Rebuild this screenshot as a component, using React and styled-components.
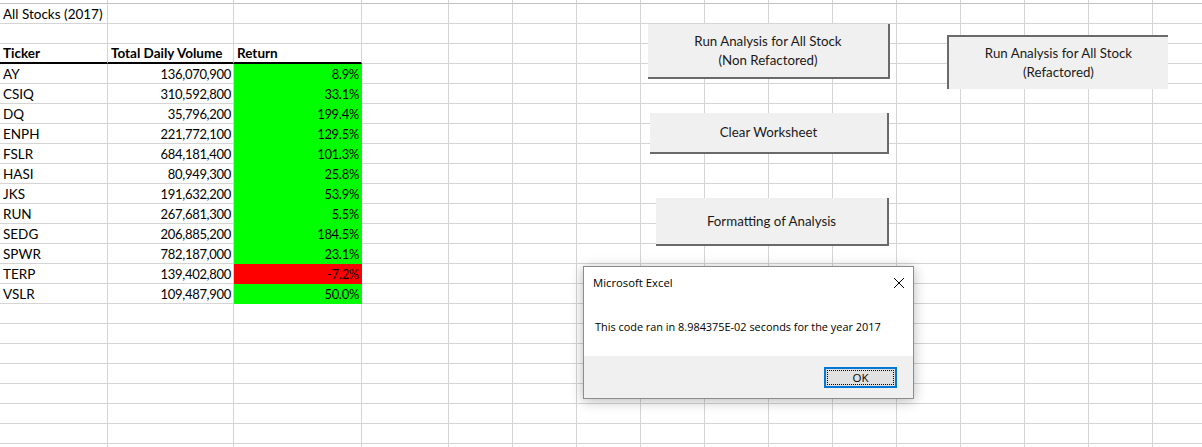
import React from "react";
import styled, { createGlobalStyle } from "styled-components";

const GlobalStyle = createGlobalStyle`
  html, body { margin: 0; padding: 0; background: #fff; }
  body { width: 1202px; height: 447px; overflow: hidden; font-family: "Lato", sans-serif; }
`;

const COLS = "108px 126px 128px 87px repeat(12, 64px)";
const GRID = "#d4d4d4";

const Sheet = styled.div`
  position: relative;
  width: 1202px;
  height: 447px;
  overflow: hidden;
  display: flex;
  flex-direction: column;
`;

const Row = styled.div`
  display: grid;
  grid-template-columns: ${COLS};
  height: ${(p) => p.$h}px;
  flex: none;
`;

const Cell = styled.div`
  box-sizing: border-box;
  border-right: 1px solid ${(p) => p.$fill || GRID};
  border-bottom: ${(p) =>
    p.$under ? "2px solid #000" : `1px solid ${p.$fill || (p.$topLine ? "#c2c2c2" : GRID)}`};
  background: ${(p) => p.$fill || "transparent"};
  display: flex;
  align-items: flex-end;
  justify-content: ${(p) => (p.$right ? "flex-end" : "flex-start")};
  padding: 0 ${(p) => (p.$right ? "2px" : "0")} 0 ${(p) => (p.$right ? "0" : "3px")};
  font-family: "Lato", sans-serif;
  font-size: ${(p) => (p.$right ? "13px" : "13.5px")};
  letter-spacing: ${(p) => (p.$right ? "-0.3px" : "0")};
  font-weight: ${(p) => (p.$bold ? 700 : 400)};
  line-height: 17px;
  color: #000;
  white-space: nowrap;
  overflow: visible;
`;

const FormButton = styled.div`
  position: absolute;
  box-sizing: border-box;
  left: ${(p) => p.$x}px;
  top: ${(p) => p.$y}px;
  width: ${(p) => p.$w}px;
  height: ${(p) => p.$h}px;
  background: #f0f0f0;
  border-right: ${(p) => (p.$pressed ? "none" : "2px solid #6a6a6a")};
  border-bottom: ${(p) => (p.$pressed ? "none" : "2px solid #6a6a6a")};
  border-top: ${(p) => (p.$pressed ? "2px solid #6a6a6a" : "none")};
  border-left: ${(p) => (p.$pressed ? "2px solid #6a6a6a" : "none")};
  display: flex;
  align-items: center;
  justify-content: center;
  text-align: center;
  font-family: "Lato", sans-serif;
  font-size: 13.3px;
  line-height: 19px;
  color: #1a1a1a;
`;

const Dialog = styled.div`
  position: absolute;
  left: 583px;
  top: 266px;
  width: 331px;
  height: 133px;
  box-sizing: border-box;
  border: 1px solid #8c8c8c;
  background: #fff;
  box-shadow: 0 2px 12px rgba(0, 0, 0, 0.28);
  display: flex;
  flex-direction: column;
  font-family: "Open Sans", sans-serif;
  font-size: 10.9px;
  color: #000;
`;

const TitleBar = styled.div`
  height: 31px;
  display: flex;
  align-items: center;
  justify-content: space-between;
  padding: 0 8px 0 9px;
  font-size: 11.3px;
`;

const Message = styled.div`
  flex: 1;
  display: flex;
  align-items: center;
  padding: 0 0 1px 11px;
`;

const Footer = styled.div`
  height: 42px;
  background: #f0f0f0;
  display: flex;
  align-items: center;
  justify-content: flex-end;
  padding-right: 16px;
`;

const OkButton = styled.div`
  width: 73px;
  height: 21px;
  box-sizing: border-box;
  border: 2px solid #0078d7;
  background: #e1e1e1;
  padding: 1px;
  display: flex;
`;

const OkInner = styled.div`
  flex: 1;
  border: 1px dotted #000;
  display: flex;
  align-items: center;
  justify-content: center;
  font-size: 11.5px;
`;

const rows = [
  ["AY", "136,070,900", "8.9%"],
  ["CSIQ", "310,592,800", "33.1%"],
  ["DQ", "35,796,200", "199.4%"],
  ["ENPH", "221,772,100", "129.5%"],
  ["FSLR", "684,181,400", "101.3%"],
  ["HASI", "80,949,300", "25.8%"],
  ["JKS", "191,632,200", "53.9%"],
  ["RUN", "267,681,300", "5.5%"],
  ["SEDG", "206,885,200", "184.5%"],
  ["SPWR", "782,187,000", "23.1%"],
  ["TERP", "139,402,800", "-7.2%"],
  ["VSLR", "109,487,900", "50.0%"],
];

function Blank({ n = 13 }) {
  return Array.from({ length: n }).map((_, i) => <Cell key={"b" + i} />);
}

export default function App() {
  return (
    <>
      <GlobalStyle />
      <Sheet>
        <Row $h={4}>
          {Array.from({ length: 16 }).map((_, i) => (
            <Cell key={i} $topLine />
          ))}
        </Row>
        <Row $h={20}>
          <Cell>All Stocks (2017)</Cell>
          <Blank n={15} />
        </Row>
        <Row $h={20}>
          <Blank n={16} />
        </Row>
        <Row $h={20}>
          <Cell $bold $under>Ticker</Cell>
          <Cell $bold $under>Total Daily Volume</Cell>
          <Cell $bold $under>Return</Cell>
          <Blank n={13} />
        </Row>
        {rows.map(([t, v, r]) => (
          <Row $h={20} key={t}>
            <Cell>{t}</Cell>
            <Cell $right>{v}</Cell>
            <Cell $right $fill={r.startsWith("-") ? "#ff0000" : "#00ff00"}>
              {r}
            </Cell>
            <Blank n={13} />
          </Row>
        ))}
        {Array.from({ length: 8 }).map((_, i) => (
          <Row $h={20} key={"e" + i}>
            <Blank n={16} />
          </Row>
        ))}

        <FormButton $x={648} $y={24} $w={242} $h={55}>
          Run Analysis for All Stock
          <br />
          (Non Refactored)
        </FormButton>
        <FormButton $x={947} $y={35} $w={221} $h={54} $pressed>
          Run Analysis for All Stock
          <br />
          (Refactored)
        </FormButton>
        <FormButton $x={650} $y={113} $w={239} $h={41}>
          Clear Worksheet
        </FormButton>
        <FormButton $x={656} $y={198} $w={233} $h={48}>
          Formatting of Analysis
        </FormButton>

        <Dialog>
          <TitleBar>
            <span>Microsoft Excel</span>
            <svg width="12" height="12" viewBox="0 0 12 12">
              <path d="M1 1 L11 11 M11 1 L1 11" stroke="#000" strokeWidth="1" fill="none" />
            </svg>
          </TitleBar>
          <Message>This code ran in 8.984375E-02 seconds for the year 2017</Message>
          <Footer>
            <OkButton>
              <OkInner>OK</OkInner>
            </OkButton>
          </Footer>
        </Dialog>
      </Sheet>
    </>
  );
}
